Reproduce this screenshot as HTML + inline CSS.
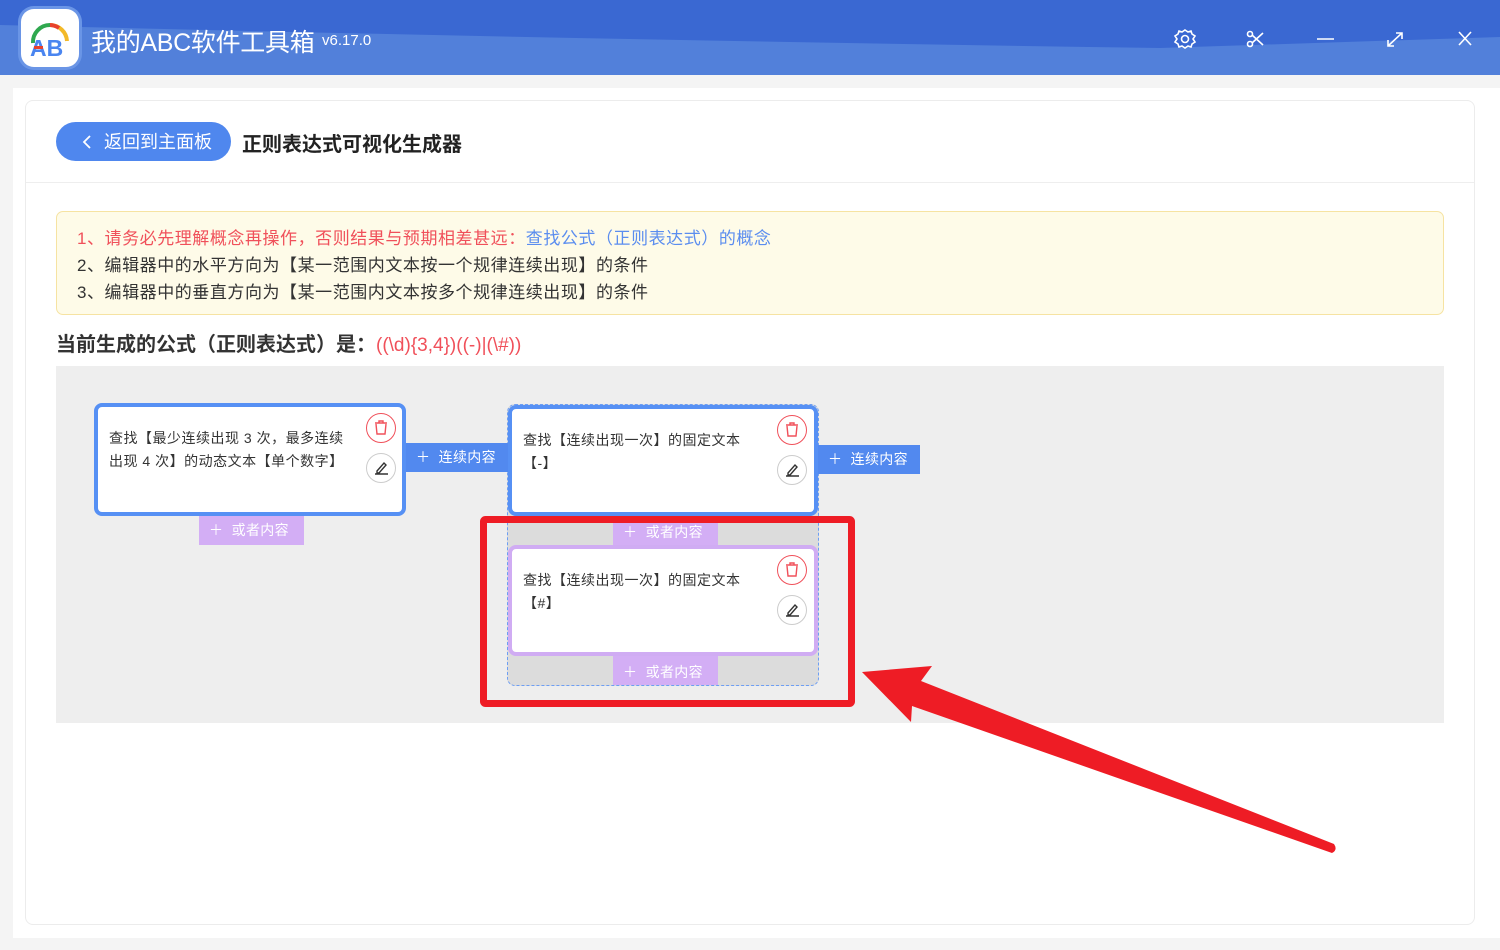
<!DOCTYPE html>
<html><head><meta charset="utf-8"><style>
*{margin:0;padding:0;box-sizing:border-box}
body{width:1500px;height:950px;background:#f4f4f4;font-family:"Liberation Sans","Noto Sans CJK SC",sans-serif;position:relative;overflow:hidden}
.hdr{position:absolute;left:0;top:0;width:1500px;height:75px;background:#5280da}
.logo{position:absolute;left:21px;top:9px;width:58px;height:58px;border-radius:13px;background:#fff;box-shadow:0 0 0 3px #6a95e6}
.title{position:absolute;left:91px;top:23px;color:#fff;font-size:25px;letter-spacing:-0.3px}
.ver{position:absolute;left:322px;top:32px;color:#fff;font-size:15px}
.main{position:absolute;left:13px;top:88px;width:1487px;height:850px;background:#fff}
.card{position:absolute;left:25px;top:100px;width:1450px;height:825px;border:1px solid #ececec;border-radius:8px;background:#fff}
.abs{position:absolute}
.back{left:56px;top:122px;width:175px;height:39px;border-radius:20px;background:#4f87ee;color:#fff;font-size:18px;line-height:41px;padding-left:48px}
.ptitle{left:242px;top:128px;font-size:20px;font-weight:bold;color:#222}
.notice{left:56px;top:211px;width:1388px;height:104px;background:#fefbe8;border:1px solid #f6e3a2;border-radius:7px;font-size:17px;letter-spacing:0.55px;color:#333;padding:13px 0 0 20px;line-height:27px}
.formula{left:56px;top:328px;font-size:20px;font-weight:bold;color:#333}
.canvas{left:56px;top:366px;width:1388px;height:357px;background:#eeeeee}
.node{position:absolute;background:#fff;border:4px solid #5690f4;border-radius:8px;font-size:14px;letter-spacing:0.5px;color:#333;line-height:23px;padding:20px 0 0 11px}
.node.p{border-color:#d0acf3}
.btn{position:absolute;height:29px;color:#fff;font-size:14px;line-height:29px;padding-left:10px;letter-spacing:0.3px}
.blue{background:#5289ef}
.purp{background:#d3aef5}
</style></head><body>
<div class="hdr"></div>
<svg class="abs" style="left:0;top:0" width="1500" height="75"><path d="M0 0 H1500 V37 L1160 48 Q600 40 0 25 Z" fill="#3a68d2"/></svg>
<div class="logo"><svg width="58" height="58" viewBox="0 0 58 58"><path d="M12 34 A17 17 0 0 1 29 16" stroke="#2fa84f" stroke-width="4" fill="none"/><path d="M29 16 A17 17 0 0 1 46 32" stroke="#f3b928" stroke-width="4" fill="none"/><path d="M29 16 A17 17 0 0 1 38 19" stroke="#e8412c" stroke-width="4" fill="none"/><text x="9" y="47" font-size="23" font-family="Liberation Sans" font-weight="bold" fill="#4a85f0">AB</text><rect x="13" y="37" width="9" height="3" fill="#e8412c"/></svg></div>
<div class="title">我的ABC软件工具箱</div><div class="ver">v6.17.0</div>
<svg class="abs" style="left:1170px;top:25px" width="310" height="30" fill="none" stroke="#fff" stroke-width="1.6">
<circle cx="15" cy="14" r="3.5"/><path d="M15 5 L18 7 L21 6 L22 9 L25 11 L23 14 L25 17 L22 19 L21 22 L18 21 L15 23 L12 21 L9 22 L8 19 L5 17 L7 14 L5 11 L8 9 L9 6 L12 7 Z"/>
<circle cx="80" cy="9" r="2.5"/><circle cx="80" cy="19" r="2.5"/><path d="M82 10 L93 20 M82 18 L93 8"/>
<path d="M147 14 H164"/>
<path d="M218 21 L232 8 M226 8 H232 V14 M218 15 V21 H224"/>
<path d="M289 7 L301 20 M301 7 L289 20"/></svg>
<div class="main"></div>
<div class="card"><div style="position:absolute;left:0;right:0;top:81px;border-top:1px solid #eee"></div></div>
<div class="abs back">返回到主面板</div>
<svg class="abs" style="left:80px;top:134px" width="14" height="16"><path d="M10 2 L4 8 L10 14" fill="none" stroke="#fff" stroke-width="1.8"/></svg>
<div class="abs ptitle">正则表达式可视化生成器</div>
<div class="abs notice"><span style="color:#f0505a">1、请务必先理解概念再操作，否则结果与预期相差甚远：</span><span style="color:#5b8def">查找公式（正则表达式）的概念</span><br>2、编辑器中的水平方向为【某一范围内文本按一个规律连续出现】的条件<br>3、编辑器中的垂直方向为【某一范围内文本按多个规律连续出现】的条件</div>
<div class="abs formula">当前生成的公式（正则表达式）是：<span style="color:#f0505a;font-weight:normal;font-size:19px">((\d){3,4})((-)|(\#))</span></div>
<div class="abs canvas"></div>
<div class="abs" style="left:507px;top:404px;width:312px;height:282px;border:1px dashed #6d9ef3;border-radius:8px;background:#dcdcdc"></div>
<div class="node" style="left:94px;top:403px;width:312px;height:113px">查找【最少连续出现 3 次，最多连续<br>出现 4 次】的动态文本【单个数字】</div>
<div class="btn blue" style="left:406px;top:443px;width:102px">＋&nbsp; 连续内容</div>
<div class="btn purp" style="left:199px;top:516px;width:105px">＋&nbsp; 或者内容</div>
<div class="node" style="left:508px;top:405px;width:310px;height:111px">查找【连续出现一次】的固定文本<br>【-】</div>
<div class="btn blue" style="left:818px;top:445px;width:102px">＋&nbsp; 连续内容</div>
<div class="btn purp" style="left:613px;top:516px;width:105px;height:30px;line-height:33px">＋&nbsp; 或者内容</div>
<div class="node p" style="left:508px;top:545px;width:310px;height:111px">查找【连续出现一次】的固定文本<br>【#】</div>
<div class="btn purp" style="left:613px;top:656px;width:105px;line-height:32px">＋&nbsp; 或者内容</div>
<svg class="abs" style="left:0;top:0" width="1500" height="950">
<g fill="#fff"><circle cx="381" cy="428" r="14.5" stroke="#f0505a"/><circle cx="381" cy="468" r="14.5" stroke="#ccc"/>
<circle cx="792" cy="430" r="14.5" stroke="#f0505a"/><circle cx="792" cy="470" r="14.5" stroke="#ccc"/>
<circle cx="792" cy="570" r="14.5" stroke="#f0505a"/><circle cx="792" cy="610" r="14.5" stroke="#ccc"/></g>
<g fill="none" stroke="#f0505a" stroke-width="1.4">
<path d="M375 423 H387 M379 423 V421 H383 V423 M376 424 L377 434 H385 L386 424"/>
<path d="M786 425 H798 M790 425 V423 H794 V425 M787 426 L788 436 H796 L797 426"/>
<path d="M786 565 H798 M790 565 V563 H794 V565 M787 566 L788 576 H796 L797 566"/></g>
<g fill="none" stroke="#333" stroke-width="1.4">
<path d="M375 474 H388 M377 471 L384 463 L386 465 L379 473 H377 Z"/>
<path d="M786 476 H799 M788 473 L795 465 L797 467 L790 475 H788 Z"/>
<path d="M786 616 H799 M788 613 L795 605 L797 607 L790 615 H788 Z"/></g>
<rect x="483.5" y="519.5" width="368" height="184" fill="none" stroke="#ee1c25" stroke-width="7" rx="2"/>
<path d="M862 672 L932 666 L921 681 L1334 844 Q1338 850 1332 853 L912 706 L911 722 Z" fill="#ee1c25"/>
</svg>
</body></html>
